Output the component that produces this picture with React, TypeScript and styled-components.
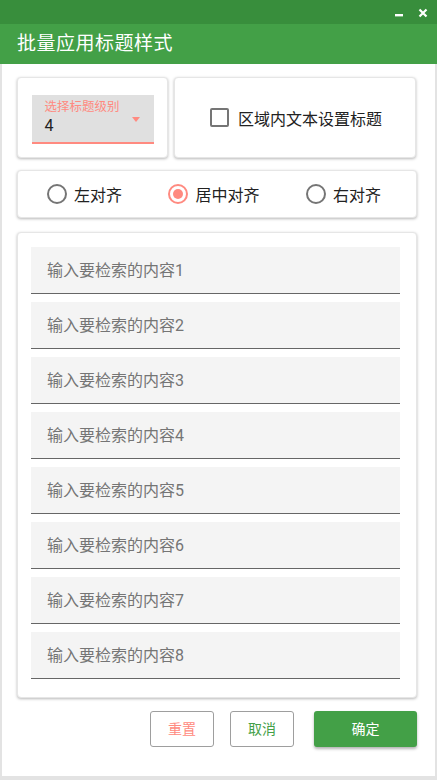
import React, { useState } from 'react'
import styled, { createGlobalStyle } from 'styled-components'

const GlobalStyle = createGlobalStyle`
    html, body {
        margin: 0;
        padding: 0;
        background: #ffffff;
        font-family: Roboto, "Noto Sans CJK SC", sans-serif;
    }
    * { box-sizing: border-box; }
`

const GREEN = '#43A047'
const SALMON = '#FF8A80'

export default function App() {
    const [align, setAlign] = useState('center')
    const [checked, setChecked] = useState(false)
    const items = [1, 2, 3, 4, 5, 6, 7, 8]
    const aligns = [
        { key: 'left', label: '左对齐' },
        { key: 'center', label: '居中对齐' },
        { key: 'right', label: '右对齐' },
    ]

    return <Window>
        <GlobalStyle/>
        <TopBar>
            <WinButton aria-label="minimize">
                <svg width="10" height="10" viewBox="0 0 10 10"><rect x="1" y="6" width="8" height="2.4" fill="#fff"/></svg>
            </WinButton>
            <WinButton aria-label="close">
                <svg width="10" height="10" viewBox="0 0 10 10"><path d="M1.5 1.5 L8.5 8.5 M8.5 1.5 L1.5 8.5" stroke="#fff" strokeWidth="2.2"/></svg>
            </WinButton>
        </TopBar>
        <TitleBar>批量应用标题样式</TitleBar>
        <Body>
            <TopRow>
                <Card>
                    <Select>
                        <SelectLabel>选择标题级别</SelectLabel>
                        <SelectValue>4</SelectValue>
                        <Arrow/>
                    </Select>
                </Card>
                <Card>
                    <CheckLabel onClick={() => setChecked(!checked)}>
                        <CheckBox $checked={checked}/>
                        区域内文本设置标题
                    </CheckLabel>
                </Card>
            </TopRow>
            <RadioCard>
                {aligns.map(a => <RadioLabel key={a.key} onClick={() => setAlign(a.key)}>
                    <Radio $on={align === a.key}/>
                    {a.label}
                </RadioLabel>)}
            </RadioCard>
            <ListCard>
                {items.map(i => <Field key={i}>
                    <FieldInput placeholder={`输入要检索的内容${i}`}/>
                </Field>)}
            </ListCard>
            <Actions>
                <OutlineButton $color={SALMON}>重置</OutlineButton>
                <OutlineButton $color={GREEN}>取消</OutlineButton>
                <PrimaryButton>确定</PrimaryButton>
            </Actions>
        </Body>
    </Window>
}

const Window = styled.div`
    width: 437px;
    height: 780px;
    display: flex;
    flex-direction: column;
    background: #fff;
`

const TopBar = styled.div`
    height: 24px;
    background: #388E3C;
    display: flex;
    justify-content: flex-end;
    align-items: center;
    gap: 14px;
    padding: 2px 9px 0 0;
`

const WinButton = styled.div`
    width: 10px;
    height: 10px;
    display: flex;
    svg { display: block; }
`

const TitleBar = styled.div`
    height: 40px;
    background: ${GREEN};
    color: #fff;
    font-size: 19px;
    line-height: 40px;
    padding-left: 17px;
    letter-spacing: 0.5px;
`

const Body = styled.div`
    flex: 1;
    border: 2px solid #e3e3e3;
    border-top: none;
    border-bottom-width: 4px;
    padding: 13px 18px 0 15px;
    display: flex;
    flex-direction: column;
`

const Card = styled.div`
    background: #fff;
    border: 1px solid #e6e6e6;
    border-radius: 4px;
    box-shadow: 0 1px 3px rgba(0, 0, 0, 0.28);
`

const TopRow = styled.div`
    display: grid;
    grid-template-columns: 151px 242px;
    gap: 6px;
    height: 81px;

    & > ${Card} {
        display: flex;
        align-items: center;
        justify-content: center;
    }
`

const Select = styled.div`
    position: relative;
    width: 122px;
    height: 49px;
    background: #e0e0e0;
    border-bottom: 2px solid ${SALMON};
    padding: 4px 0 0 13px;
    margin-top: 3px;
`

const SelectLabel = styled.div`
    font-size: 12.5px;
    line-height: 16px;
    color: ${SALMON};
`

const SelectValue = styled.div`
    font-size: 16px;
    line-height: 22px;
    color: #222;
`

const Arrow = styled.div`
    position: absolute;
    right: 14px;
    top: 22px;
    width: 0;
    height: 0;
    border-left: 4.5px solid transparent;
    border-right: 4.5px solid transparent;
    border-top: 5px solid ${SALMON};
`

const CheckLabel = styled.div`
    display: flex;
    align-items: center;
    gap: 9px;
    font-size: 16px;
    color: #222;
    cursor: pointer;
    margin-left: 2px;
`

const CheckBox = styled.div<{ $checked: boolean }>`
    width: 19px;
    height: 19px;
    border: 2px solid #757575;
    border-radius: 2px;
    background: ${p => p.$checked ? GREEN : 'transparent'};
`

const RadioCard = styled(Card)`
    margin-top: 12px;
    height: 48px;
    display: flex;
    align-items: center;
    padding: 0 35px 0 29px;
    justify-content: space-between;
`

const RadioLabel = styled.div`
    display: flex;
    align-items: center;
    gap: 7px;
    font-size: 16px;
    color: #222;
    cursor: pointer;
`

const Radio = styled.div<{ $on: boolean }>`
    width: 20px;
    height: 20px;
    border-radius: 50%;
    border: 2px solid ${p => p.$on ? SALMON : '#757575'};
    display: flex;
    align-items: center;
    justify-content: center;

    &::after {
        content: '';
        width: 10px;
        height: 10px;
        border-radius: 50%;
        background: ${SALMON};
        display: ${p => p.$on ? 'block' : 'none'};
    }
`

const ListCard = styled(Card)`
    margin-top: 14px;
    height: 466px;
    padding: 14px 16px 0 13px;
    display: flex;
    flex-direction: column;
    gap: 8px;
`

const Field = styled.div`
    height: 47px;
    background: #f4f4f4;
    border-bottom: 1px solid #666;
    display: flex;
    align-items: center;
`

const FieldInput = styled.input`
    all: unset;
    width: 100%;
    height: 100%;
    padding: 0 16px;
    font-family: Roboto, "Noto Sans CJK SC", sans-serif;
    font-size: 16px;
    color: #333;

    &::placeholder {
        color: #757575;
    }
`

const Actions = styled.div`
    margin-top: 13px;
    display: flex;
    justify-content: flex-end;
    gap: 16px;
`

const OutlineButton = styled.button<{ $color: string }>`
    all: unset;
    width: 64px;
    height: 36px;
    border: 1px solid #9e9e9e;
    border-radius: 3px;
    box-sizing: border-box;
    text-align: center;
    line-height: 34px;
    font-size: 14px;
    color: ${p => p.$color};
    font-family: Roboto, "Noto Sans CJK SC", sans-serif;
`

const PrimaryButton = styled.button`
    all: unset;
    width: 103px;
    height: 36px;
    margin-left: 4px;
    border-radius: 3px;
    background: ${GREEN};
    box-shadow: 0 2px 3px rgba(0, 0, 0, 0.3);
    text-align: center;
    line-height: 36px;
    font-size: 14px;
    color: #fff;
    font-family: Roboto, "Noto Sans CJK SC", sans-serif;
`
